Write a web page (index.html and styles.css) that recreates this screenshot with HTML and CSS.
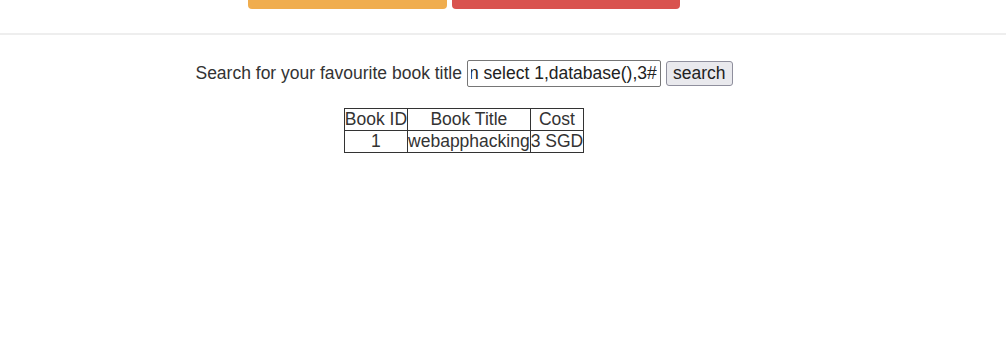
FILE: index.html
```html
<!DOCTYPE html>
<html lang="en">
<head>
    <meta charset="UTF-8">
    <title>Book search</title>
    <link rel="stylesheet" href="styles.css">
</head>
<body>
    <div class="topBar">
        <div class="btnWarning"></div>
        <div class="btnDanger"></div>
    </div>
    <hr class="divider">
    <div class="content">
        <form class="searchForm" onsubmit="return false">
            Search for your favourite book title
            <input type="text" id="title" value="1' union select 1,database(),3#">
            <input type="submit" class="searchBtn" value="search">
        </form>
        <table class="books">
            <tr>
                <th>Book ID</th>
                <th>Book Title</th>
                <th>Cost</th>
            </tr>
            <tr>
                <td>1</td>
                <td>webapphacking</td>
                <td>3 SGD</td>
            </tr>
        </table>
    </div>
    <script>
    let box = document.getElementById('title');
    box.scrollLeft = box.scrollWidth;
    </script>
</body>
</html>
```

FILE: styles.css
```css
body{
    margin: 0;
    font-family: "Liberation Sans", Arial, sans-serif;
    font-size: 17.5px;
    color: #333;
    background: #fff;
}
.topBar{
    display: flex;
    width: 928px;
    justify-content: center;
    gap: 5px;
}
.btnWarning, .btnDanger{
    height: 9px;
    border-radius: 0 0 4px 4px;
}
.btnWarning{
    width: 199px;
    background-color: #f0ad4e;
}
.btnDanger{
    width: 228px;
    background-color: #d9534f;
}
.divider{
    margin: 24px 0 0 0;
    border: 0;
    border-top: 2px solid #eee;
}
.content{
    width: 928px;
    display: flex;
    flex-direction: column;
    align-items: center;
}
.searchForm{
    margin: 25px 0 0 0;
    display: flex;
    align-items: center;
    gap: 5px;
}
#title{
    font-family: inherit;
    font-size: 17.5px;
    color: #222;
    width: 194px;
    height: 27px;
    box-sizing: border-box;
    padding: 2px 3px;
    border: 1px solid #767676;
    border-radius: 2px;
}
.searchBtn{
    font-family: inherit;
    font-size: 17.5px;
    color: #222;
    height: 25px;
    box-sizing: border-box;
    padding: 0 6px;
    background: #e9e9ed;
    border: 1px solid #8f8f9d;
    border-radius: 3px;
}
.books{
    margin-top: 21px;
    border-collapse: collapse;
}
.books th, .books td{
    border: 1px solid #333;
    padding: 0;
    font-weight: normal;
    text-align: center;
    line-height: 21px;
}
```
